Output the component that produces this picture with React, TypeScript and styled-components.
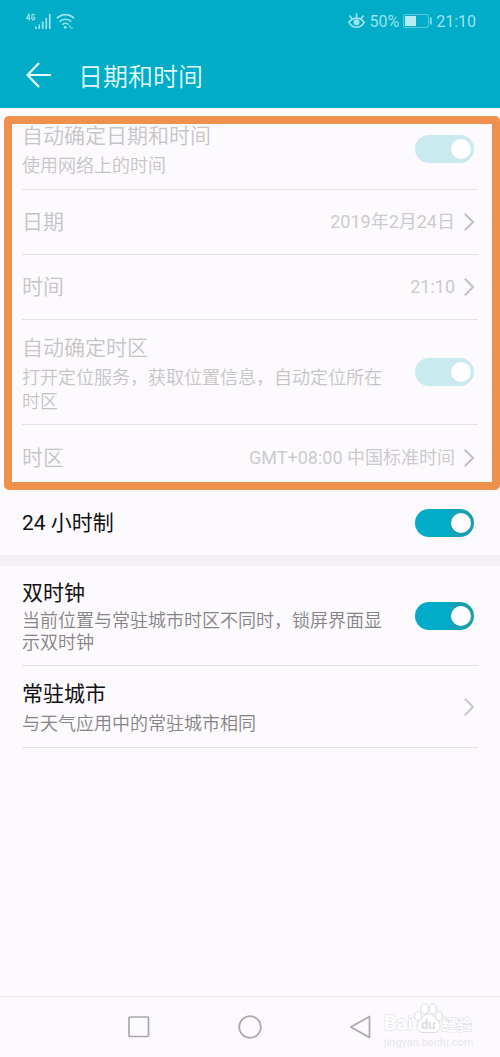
import React, { useId } from "react";
import styled, { createGlobalStyle } from "styled-components";

const sans = `Roboto, "Noto Sans CJK SC", sans-serif`;

const GlobalStyle = createGlobalStyle`
  *, *::before, *::after { box-sizing: border-box; }
  body { margin: 0; background: #fcfafd; font-family: ${sans}; }
  button, input { font: inherit; margin: 0; }
  svg { display: block; flex: none; }
`;

const Screen = styled.div`
  min-height: 100vh;
  display: flex;
  flex-direction: column;
  background: #fcfafd;
`;

const Header = styled.header`
  background: #00acc7;
`;

const StatusBar = styled.div`
  display: flex;
  align-items: center;
  justify-content: space-between;
  height: 42px;
  padding: 0 24px 0 26px;
  color: #9be3ec;
  font-size: 16px;
`;

const StatusGroup = styled.div`
  display: flex;
  align-items: center;
  gap: 4px;
`;

const TitleBar = styled.div`
  display: flex;
  align-items: center;
  gap: 27px;
  height: 66px;
  padding: 0 26px;
`;

const BackButton = styled.button`
  padding: 0;
  border: 0;
  background: none;
  cursor: pointer;
`;

const Heading = styled.h1`
  margin: 0;
  padding-top: 5px;
  font-size: 25px;
  line-height: 36px;
  font-weight: 350;
  color: #e2fafc;
`;

const Group = styled.section`
  position: relative;
`;

const Highlight = styled.div`
  position: absolute;
  inset: 8px 0 0 4px;
  border: 8px solid #ee914c;
  border-radius: 5px;
  pointer-events: none;
`;

const Separator = styled.div`
  height: 11px;
  background: #f3f1f4;
`;

const Row = styled.div<{ $height: number; $last?: boolean }>`
  display: flex;
  align-items: center;
  justify-content: space-between;
  gap: 12px;
  min-height: ${(p) => p.$height}px;
  margin: 0 22px;
  padding-right: 4px;
  border-bottom: ${(p) => (p.$last ? "0" : "1px solid #e4e2e5")};
`;

const LinkRow = styled(Row).attrs({ as: "button", type: "button" })`
  width: calc(100% - 44px);
  padding: 0 4px 0 0;
  border-width: ${(p) => (p.$last ? "0" : "0 0 1px")};
  background: none;
  text-align: left;
  cursor: pointer;
  &:disabled { cursor: default; }
`;

const Texts = styled.span<{ $tight?: boolean }>`
  display: flex;
  flex-direction: column;
  gap: ${(p) => (p.$tight ? 2 : 3)}px;
  flex: 0 1 362px;
  padding-top: ${(p) => (p.$tight ? 0 : 2)}px;
`;

const Label = styled.label<{ $muted?: boolean }>`
  font-size: 21px;
  line-height: 30px;
  font-weight: ${(p) => (p.$muted ? 350 : 400)};
  color: ${(p) => (p.$muted ? "#c6c4c7" : "#111012")};
`;

const Note = styled.span<{ $muted?: boolean; $tight?: boolean }>`
  font-size: 18px;
  line-height: ${(p) => (p.$tight ? 22 : 24)}px;
  font-weight: 350;
  color: ${(p) => (p.$muted ? "#c6c4c7" : "#858386")};
`;

const Value = styled.span`
  display: flex;
  align-items: center;
  gap: 9px;
  font-size: 18px;
  line-height: 24px;
  color: #cccacd;
`;

const Switch = styled.input.attrs({ type: "checkbox", role: "switch" })`
  appearance: none;
  flex: none;
  display: flex;
  align-items: center;
  width: 59px;
  height: 28px;
  padding: 0 3px;
  border-radius: 14px;
  background: #bdbbbe;
  cursor: pointer;
  &::before {
    content: "";
    width: 20px;
    height: 20px;
    border-radius: 50%;
    background: #fefdff;
  }
  &:checked {
    justify-content: flex-end;
    background: linear-gradient(90deg, #00acc7 50%, #1b9fb0 75%);
  }
  &:checked:disabled {
    background: #c9eaef;
    cursor: default;
  }
`;

const NavBar = styled.nav`
  position: relative;
  display: flex;
  align-items: center;
  justify-content: center;
  gap: 87px;
  height: 61px;
  margin-top: auto;
  border-top: 1px solid #e8e6e9;
`;

const NavButton = styled.button`
  padding: 0;
  border: 0;
  background: none;
  cursor: pointer;
`;

const Watermark = styled.svg`
  position: absolute;
  right: 20px;
  bottom: 6px;
  pointer-events: none;
`;

function Chevron({ muted }: { muted?: boolean }) {
  return (
    <svg width="10" height="18" viewBox="0 0 10 18" fill="none" stroke={muted ? "#c2c0c3" : "#c9c7ca"} strokeWidth="2">
      <path d="M.8 .8 9 9 .8 17.2" />
    </svg>
  );
}

function SignalIcon() {
  return (
    <svg width="26" height="17" viewBox="0 0 26 17" fill="currentColor">
      <path d="M3.200 7.500V.8L.6 5.500h3.800M8.600 2.400C8.400.6 5.900.6 5.900 2.800v2.500c0 2.200 2.700 2.200 2.700 0V4.400H7.200" fill="none" stroke="currentColor" strokeWidth="1.200" />
      <path d="M9 13.500h1.700V16H9zM12.400 11.500h1.700V16h-1.700zM15.900 8.500h1.700V16h-1.700zM19.400 5h1.700v11h-1.700zM22.900 1h1.700v15h-1.700z" />
    </svg>
  );
}

function WifiIcon() {
  return (
    <svg width="19" height="17" viewBox="0 0 19 17" fill="none" stroke="currentColor" strokeWidth="1.700">
      <path d="M.8 5.400C5.800.4 13.200.4 18.200 5.400M3.600 8.700c3.300-3.300 8.500-3.300 11.800 0M6.300 11.600c1.800-1.800 4.600-1.800 6.400 0" />
      <circle cx="9.300" cy="14.400" r="1.400" fill="currentColor" stroke="none" />
      <path d="m12.700 14.300 1.300-2 1.300 2zM14.600 14.500l1.300 1.700 1.300-1.700z" fill="currentColor" stroke="none" />
    </svg>
  );
}

function EyeIcon() {
  return (
    <svg width="17" height="16" viewBox="0 0 17 16" fill="none" stroke="currentColor" strokeWidth="1.700">
      <path d="M.9 9.300C4.500 3.600 12.500 3.600 16.100 9.300 12.500 15.800 4.500 15.800 .9 9.300ZM8.500 4.700V.5M3.800 5.600 1.500 2.600M13.200 5.600l2.300-3" />
      <circle cx="8.500" cy="9.300" r="3" fill="currentColor" stroke="none" />
    </svg>
  );
}

function BatteryIcon() {
  return (
    <svg width="29" height="14" viewBox="0 0 29 14">
      <rect x=".6" y=".6" width="24.800" height="12.800" rx="1.500" fill="none" stroke="currentColor" strokeOpacity=".6" />
      <rect x="2" y="2" width="11" height="10" fill="#b3ecf2" />
      <rect x="27" y="3.500" width="1.600" height="7" fill="currentColor" />
    </svg>
  );
}

type SwitchRowProps = { title: string; note?: string; height: number; muted?: boolean; tight?: boolean; last?: boolean };

function SwitchRow({ title, note, height, muted, tight, last }: SwitchRowProps) {
  const id = useId();
  return (
    <Row $height={height} $last={last}>
      <Texts $tight={tight}>
        <Label htmlFor={id} $muted={muted}>{title}</Label>
        {note && <Note $muted={muted} $tight={tight}>{note}</Note>}
      </Texts>
      <Switch id={id} defaultChecked disabled={muted} />
    </Row>
  );
}

function ValueRow({ title, value, height, last }: { title: string; value: string; height: number; last?: boolean }) {
  return (
    <LinkRow $height={height} $last={last} disabled>
      <Label as="span" $muted>{title}</Label>
      <Value>{value}<Chevron muted /></Value>
    </LinkRow>
  );
}

export default function App() {
  return (
    <Screen>
      <GlobalStyle />
      <Header>
        <StatusBar>
          <StatusGroup>
            <SignalIcon />
            <WifiIcon />
          </StatusGroup>
          <StatusGroup>
            <EyeIcon />
            <span>50%</span>
            <BatteryIcon />
            <span>21:10</span>
          </StatusGroup>
        </StatusBar>
        <TitleBar>
          <BackButton aria-label="返回">
            <svg width="25" height="26" viewBox="0 0 25 26" fill="none" stroke="#e8fcfd" strokeWidth="2.200">
              <path d="M13 1 1.500 13 13 25M1.500 13H25" />
            </svg>
          </BackButton>
          <Heading>日期和时间</Heading>
        </TitleBar>
      </Header>
      <main>
        <Group>
          <SwitchRow title="自动确定日期和时间" note="使用网络上的时间" height={82} muted />
          <ValueRow title="日期" value="2019年2月24日" height={65} />
          <ValueRow title="时间" value="21:10" height={65} />
          <SwitchRow title="自动确定时区" note="打开定位服务，获取位置信息，自动定位所在时区" height={105} muted />
          <ValueRow title="时区" value="GMT+08:00 中国标准时间" height={65} last />
          <Highlight />
        </Group>
        <Group>
          <SwitchRow title="24 小时制" height={65} tight last />
        </Group>
        <Separator />
        <Group>
          <SwitchRow title="双时钟" note="当前位置与常驻城市时区不同时，锁屏界面显示双时钟" height={100} tight />
          <LinkRow $height={82}>
            <Texts>
              <Label as="span">常驻城市</Label>
              <Note>与天气应用中的常驻城市相同</Note>
            </Texts>
            <Chevron />
          </LinkRow>
        </Group>
      </main>
      <NavBar>
        <NavButton aria-label="最近任务">
          <svg width="24" height="24" viewBox="0 0 24 24" fill="none" stroke="#aaa8ab" strokeWidth="1.700">
            <rect x="2" y="2" width="19.500" height="19.500" rx="1" />
          </svg>
        </NavButton>
        <NavButton aria-label="主屏幕">
          <svg width="24" height="24" viewBox="0 0 24 24" fill="none" stroke="#aaa8ab" strokeWidth="1.700">
            <circle cx="12" cy="12" r="10.800" />
          </svg>
        </NavButton>
        <NavButton aria-label="返回上一页">
          <svg width="24" height="24" viewBox="0 0 24 24" fill="none" stroke="#aaa8ab" strokeWidth="1.700" strokeLinejoin="round">
            <path d="M20.500 1.500v21L1.800 12z" />
          </svg>
        </NavButton>
        <Watermark width="98" height="48" viewBox="0 0 98 48" fill="#fefdff" stroke="#dddbde" strokeWidth="1" fontFamily={sans}>
          <text x="2" y="27" fontSize="20" fontWeight="700" paintOrder="stroke">Bai</text>
          <ellipse cx="36" cy="13" rx="3.500" ry="4.500" />
          <ellipse cx="42.500" cy="5.800" rx="3.800" ry="5.200" />
          <ellipse cx="51" cy="5.800" rx="3.800" ry="5.200" />
          <ellipse cx="57" cy="13" rx="3.500" ry="4.500" />
          <path d="M46.500 11c5 0 6 3.500 9.500 7s3 11-3.500 11.500h-12C34 29 33.500 21.500 37 18S42 11 46.500 11Z" />
          <text x="39" y="26" fontSize="13" fontWeight="700" fill="#dddbde" stroke="none">du</text>
          <text x="60" y="27" fontSize="15" fontWeight="700" paintOrder="stroke">经验</text>
          <text x="2" y="43" fontSize="11" fill="#e9e7ea" stroke="none">jingyan.baidu.com</text>
        </Watermark>
      </NavBar>
    </Screen>
  );
}
